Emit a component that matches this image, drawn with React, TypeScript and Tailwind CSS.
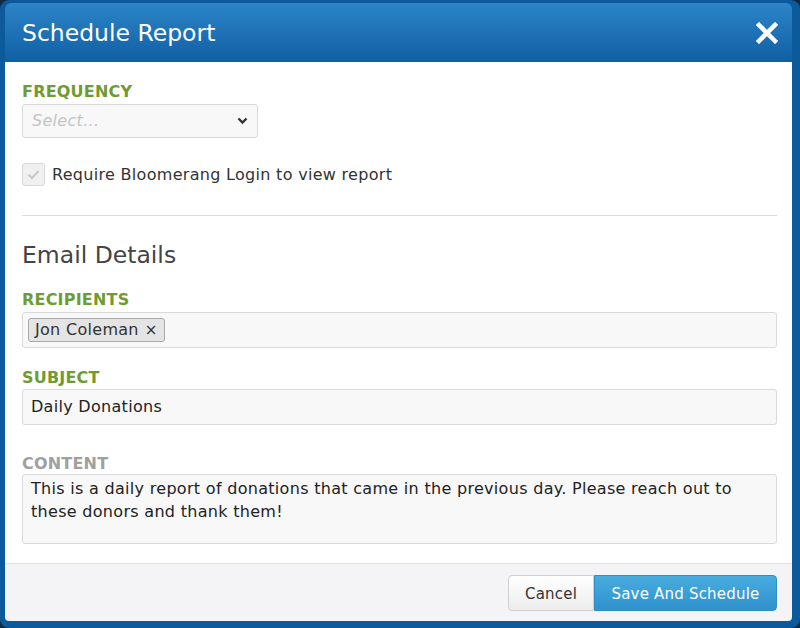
import React from 'react';

const font = { fontFamily: '"DejaVu Sans", Verdana, sans-serif' };

function FieldLabel({ children, muted }: { children: React.ReactNode; muted?: boolean }) {
    return (
        <div className={`text-[16px] leading-[18px] font-bold uppercase tracking-[0.2px] ${muted ? 'text-[#a0a0a0]' : 'text-[#6f9c30]'}`}>
            {children}
        </div>
    );
}

export default function App() {
    return (
        <div className="w-[800px] h-[628px] bg-[#16283b]" style={font}>
            <div className="h-full flex flex-col rounded-[9px] bg-[#0c599b] pt-[3px] pl-[5px] pr-[8px] pb-[7px]">
                {/* header */}
                <div className="h-[59px] flex items-center justify-between rounded-t-[6px] bg-gradient-to-b from-[#2c85c8] to-[#0f5fa3] pl-[17px] pr-[14px]">
                    <h1 className="text-[23.5px] text-white pt-[2px]">Schedule Report</h1>
                    <svg width="22" height="22" viewBox="0 0 22 22">
                        <path d="M3 3 L19 19 M19 3 L3 19" stroke="white" strokeWidth="4.5" strokeLinecap="square" />
                    </svg>
                </div>

                {/* body */}
                <div className="flex-1 bg-white pl-[17px] pr-[15px] pt-[21px] text-[#333] text-[16px] tracking-[0.3px]">
                    <FieldLabel>Frequency</FieldLabel>
                    <div className="mt-[3px] w-[236px] h-[34px] flex items-center justify-between rounded-[3px] border border-[#dadada] bg-[#f8f8f9] pl-[9px] pr-[9px]">
                        <span className="italic text-[#c4c4c4]">Select...</span>
                        <svg width="11" height="8" viewBox="0 0 11 8">
                            <path d="M1.5 1.5 L5.5 5.5 L9.5 1.5" stroke="#333" strokeWidth="2.4" fill="none" />
                        </svg>
                    </div>

                    <div className="mt-[25px] h-[23px] flex items-center gap-[7px]">
                        <div className="w-[23px] h-[23px] flex items-center justify-center rounded-[3px] border border-[#d8d8d8] bg-[#f0f0f0]">
                            <svg width="13" height="11" viewBox="0 0 13 11">
                                <path d="M1.5 5.5 L5 9 L11.5 2" stroke="#c9c9c9" strokeWidth="2.2" fill="none" />
                            </svg>
                        </div>
                        <span className="leading-[22px] text-[#333]">Require Bloomerang Login to view report</span>
                    </div>

                    <div className="mt-[29px] h-px bg-[#dcdcdc]" />

                    <h2 className="mt-[26px] text-[23.5px] leading-[26px] tracking-normal text-[#444]">Email Details</h2>

                    <div className="mt-[23px]">
                        <FieldLabel>Recipients</FieldLabel>
                    </div>
                    <div className="mt-[3px] h-[36px] flex items-center rounded-[3px] border border-[#dadada] bg-[#f8f8f9] pl-[5px]">
                        <span className="h-[24px] flex items-center gap-[6px] rounded-[3px] border border-[#a9a9a9] bg-[#e4e4e4] px-[6px] leading-[20px] text-[#333]">
                            Jon Coleman <span className="text-[15px]">×</span>
                        </span>
                    </div>

                    <div className="mt-[21px]">
                        <FieldLabel>Subject</FieldLabel>
                    </div>
                    <div className="mt-[2px] h-[36px] flex items-center rounded-[3px] border border-[#dadada] bg-[#f8f8f9] pl-[8px] text-[#222]">
                        Daily Donations
                    </div>

                    <div className="mt-[30px]">
                        <FieldLabel muted>Content</FieldLabel>
                    </div>
                    <div className="mt-[1px] h-[70px] rounded-[3px] border border-[#dadada] bg-[#f8f8f9] pl-[8px] pr-[8px] pt-[2px] leading-[23px] text-[#222]">
                        This is a daily report of donations that came in the previous day. Please reach out to these donors and thank them!
                    </div>
                </div>

                {/* footer */}
                <div className="h-[58px] flex items-center justify-end border-t border-[#e2e2e6] bg-[#f4f4f6] pr-[15px] rounded-b-[4px] text-[15px] tracking-[0.2px]">
                    <button className="h-[36px] w-[86px] pt-[3px] rounded-l-[4px] border border-[#cfcfcf] bg-gradient-to-b from-white to-[#ececec] text-[#333]">
                        Cancel
                    </button>
                    <button className="h-[36px] w-[183px] pt-[3px] rounded-r-[4px] border border-[#2f8fc6] bg-gradient-to-b from-[#48acdf] to-[#2f92cd] text-white">
                        Save And Schedule
                    </button>
                </div>
            </div>
        </div>
    );
}
